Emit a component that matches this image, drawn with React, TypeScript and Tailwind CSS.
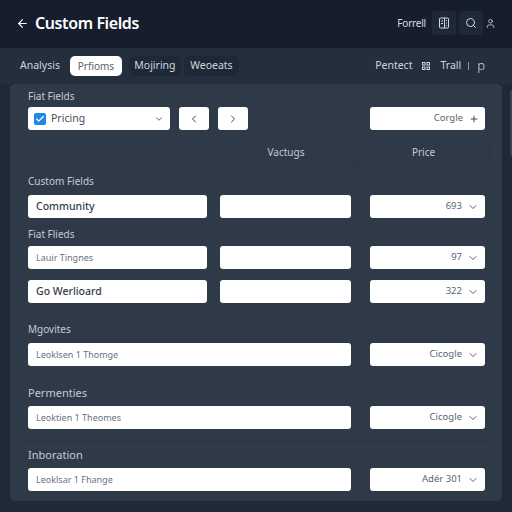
import React from "react";
import { ArrowLeft, ChevronDown, ChevronLeft, ChevronRight, Plus, Search, User, Check } from "lucide-react";

const Box = ({ children, className = "" }: { children?: React.ReactNode; className?: string }) => (
  <div className={`h-[23px] rounded-[3px] bg-white flex items-center ${className}`}>{children}</div>
);

const Value = ({ v }: { v: string }) => (
  <Box className="justify-end pr-[6px] gap-[5px] text-[9.5px] text-[#5b6470]">
    <span>{v}</span>
    <ChevronDown size={12} strokeWidth={1.7} className="text-[#3f4754]" />
  </Box>
);

const Label = ({ children, className = "" }: { children: React.ReactNode; className?: string }) => (
  <div className={`text-[10px] leading-[14px] text-[#c3cad3] ${className}`}>{children}</div>
);

const Triple = ({ text, v, strong }: { text: string; v: string; strong?: boolean }) => (
  <div className="grid grid-cols-[179px_131px_115px] [column-gap:13px]">
    <Box className={`pl-[8px] ${strong ? "text-[10.5px] font-medium text-[#343c48]" : "text-[9px] text-[#6b7380]"}`}>{text}</Box>
    <Box />
    <div className="ml-[6px] w-[115px]"><Value v={v} /></div>
  </div>
);

const Wide = ({ text, v }: { text: string; v: string }) => (
  <div className="flex gap-[19px]">
    <Box className="w-[323px] pl-[8px] text-[9px] text-[#6b7380]">{text}</Box>
    <div className="w-[115px]"><Value v={v} /></div>
  </div>
);

const Rule = () => <div className="h-px bg-[#2a3442] -ml-[6px] mr-[-5px]" />;

export default function App() {
  return (
    <div className="relative w-[512px] h-[512px] overflow-hidden bg-[#1f2937] font-['Noto_Sans','Liberation_Sans',sans-serif]">
      <header className="h-[48px] bg-[#161e2e] flex items-center pl-[16px] pr-[16px] pb-[2px] text-white">
        <ArrowLeft size={13} strokeWidth={2} className="mr-[6px]" />
        <h1 className="text-[16px] font-semibold tracking-[-0.4px]">Custom Fields</h1>
        <div className="ml-auto flex items-center text-[#d5dae1]">
          <span className="text-[10px] tracking-[-0.2px] mr-[6px]">Forrell</span>
          <span className="w-[24px] h-[24px] rounded-[3px] bg-[#1f2836] flex items-center justify-center mr-[3px]">
            <svg width="12" height="12" viewBox="0 0 12 12" fill="none" stroke="currentColor" strokeWidth="1">
              <rect x="1.5" y="1" width="9" height="10" rx="1" />
              <path d="M6.5 1v10M3 4h2M3 6.5h2M8 3.5h1M8 6h1M8 8.5h1" />
            </svg>
          </span>
          <span className="w-[24px] h-[24px] rounded-[3px] bg-[#1f2836] flex items-center justify-center mr-[2px]">
            <Search size={12} strokeWidth={2} />
          </span>
          <User size={11} strokeWidth={1.6} />
        </div>
      </header>

      <nav className="h-[36px] bg-[#242e3c] flex items-center pl-[20px] pr-[27px] text-[10.5px] text-[#cfd5dc]">
        <span className="mr-[10px]">Analysis</span>
        <span className="h-[20px] w-[52px] rounded-[5px] bg-white text-[#5a626e] flex items-center justify-center mr-[7px] text-[10px]">Prfioms</span>
        <span className="h-[20px] w-[52px] rounded-[5px] bg-[#1f2936] flex items-center justify-center mr-[3px]">Mojiring</span>
        <span className="h-[20px] w-[55px] rounded-[5px] bg-[#1f2936] flex items-center justify-center">Weoeats</span>
        <div className="ml-auto flex items-center">
          <span>Pentect</span>
          <svg width="8" height="8" viewBox="0 0 8 8" fill="none" stroke="currentColor" strokeWidth="1" className="ml-[10px] mr-[10px]">
            <rect x="0.5" y="0.5" width="2.5" height="2.5" />
            <rect x="5" y="0.5" width="2.5" height="2.5" />
            <rect x="0.5" y="5" width="2.5" height="2.5" />
            <rect x="5" y="5" width="2.5" height="2.5" />
          </svg>
          <span>Trall</span>
          <span className="w-px h-[8px] bg-[#8d96a2] ml-[7px] mr-[8px]" />
          <span className="text-[13px] font-light">p</span>
        </div>
      </nav>

      <main className="ml-[10px] mr-[10px] h-[417px] rounded-[5px] bg-[#2f3a49] pl-[18px] pr-[17px] pt-[5px]">
        <Label className="mb-[4px]">Fiat Fields</Label>
        <div className="flex">
          <Box className="w-[142px] pl-[6px] pr-[6px] text-[10.5px] text-[#454d59]">
            <span className="w-[12px] h-[12px] rounded-[2px] bg-[#1e88e5] flex items-center justify-center mr-[5px]">
              <Check size={10} strokeWidth={3} className="text-white" />
            </span>
            Pricing
            <ChevronDown size={10} strokeWidth={2} className="ml-auto text-[#3f4754]" />
          </Box>
          <Box className="w-[30px] ml-[9px] justify-center text-[#3f4754]"><ChevronLeft size={12} strokeWidth={2} /></Box>
          <Box className="w-[30px] ml-[9px] justify-center text-[#3f4754]"><ChevronRight size={12} strokeWidth={2} /></Box>
          <Box className="w-[115px] ml-auto justify-end pr-[6px] gap-[6px] text-[9.5px] text-[#5b6470]">
            <span>Corgle</span>
            <Plus size={10} strokeWidth={2.4} className="text-[#3f4754]" />
          </Box>
        </div>

        <div className="flex h-[26px] mt-[10px] -mr-[5px] ml-[190px] border-b border-[#2a3442] text-[10px] text-[#c3cad3]">
          <div className="w-[140px] border-x border-[#2a3442] flex items-center justify-center pr-[4px]">Vactugs</div>
          <div className="flex-1 border-r border-[#2a3442] flex items-center justify-center">Price</div>
        </div>

        <Label className="mt-[8px] mb-[7px] text-[9.5px]">Custom Fields</Label>
        <Triple text="Community" v="693" strong />
        <Label className="mt-[9px] mb-[5px]">Fiat Flieds</Label>
        <Triple text="Lauir Tingnes" v="97" />
        <div className="h-[11px]" />
        <Triple text="Go Werlioard" v="322" strong />

        <div className="h-[11px]" />
        <Rule />
        <Label className="mt-[7px] mb-[7px]">Mgovites</Label>
        <Wide text="Leoklsen 1 Thomge" v="Cicogle" />
        <div className="h-[12px]" />
        <Rule />
        <Label className="mt-[7px] mb-[6px] text-[11px]">Permenties</Label>
        <Wide text="Leoktien 1 Theomes" v="Cicogle" />
        <div className="h-[11px]" />
        <Rule />
        <Label className="mt-[7px] mb-[6px] text-[11px]">Inboration</Label>
        <Wide text="Leoklsar 1 Fhange" v="Adér 301" />
      </main>

      <div className="absolute right-0 top-[90px] w-[2px] h-[66px] rounded-l bg-[#3a4453]" />
    </div>
  );
}
